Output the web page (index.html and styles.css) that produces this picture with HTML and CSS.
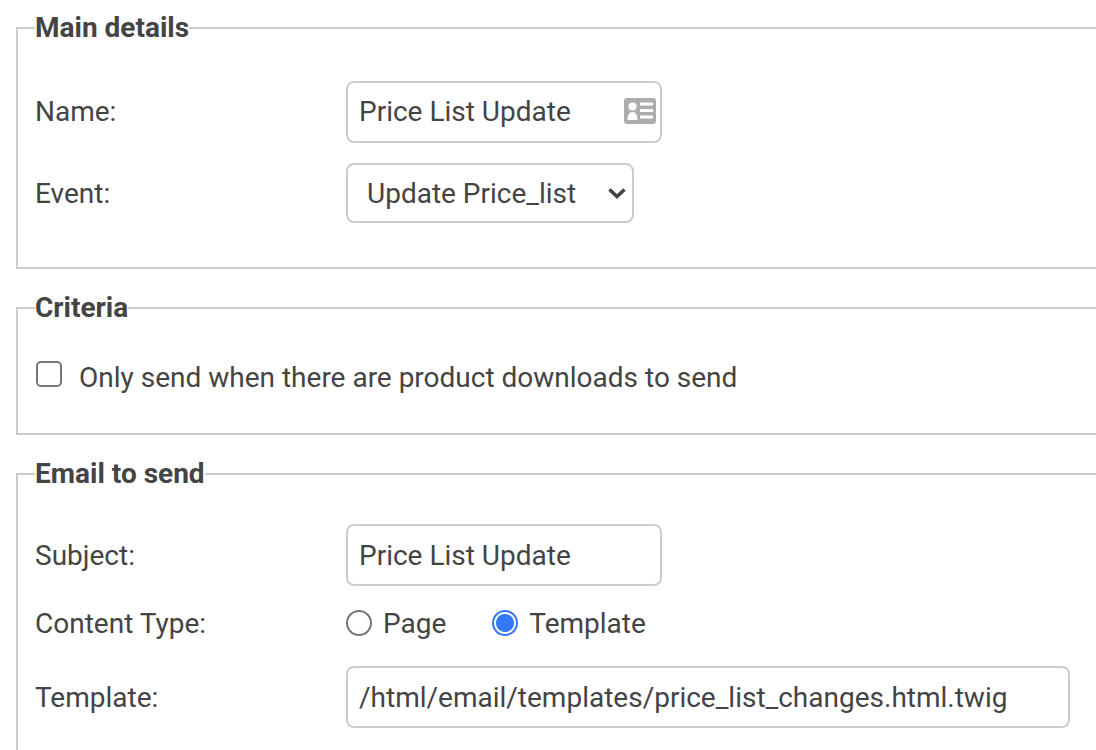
FILE: index.html
```html
<!DOCTYPE html>
<html lang="en">
<head>
<meta charset="utf-8">
<title>Price List Update</title>
<link rel="stylesheet" href="styles.css">
</head>
<body>
<form class="form">
  <fieldset class="group group-main">
    <legend>Main details</legend>
    <div class="row">
      <label class="label label-name" for="name">Name:</label>
      <div class="field field-name">
        <input class="control control-text" id="name" type="text" value="Price List Update">
        <svg class="field-icon" viewBox="0 0 32 26" aria-hidden="true">
          <rect width="32" height="26" rx="3" fill="#adadad"/>
          <circle cx="8.500" cy="8.500" r="4" fill="#fff"/>
          <path d="M3.500 22c0-5 1.500-8 5-8s5 3 5 8z" fill="#fff"/>
          <path d="M16 4.500h13v3H16zM16 11h13v3H16zM16 17.500h13v3H16z" fill="#fff"/>
        </svg>
      </div>
    </div>
    <div class="row">
      <label class="label" for="event">Event:</label>
      <div class="field field-event">
        <select class="control select" id="event">
          <option>Update Price_list</option>
        </select>
        <svg class="select-arrow" viewBox="0 0 20 12" aria-hidden="true">
          <path d="M2.500 2.500 10 9.500l7.500-7" fill="none" stroke="#444" stroke-width="3.600"/>
        </svg>
      </div>
    </div>
  </fieldset>

  <fieldset class="group group-criteria">
    <legend>Criteria</legend>
    <label class="check">
      <input class="box" type="checkbox">
      <span class="check-text">Only send when there are product downloads to send</span>
    </label>
  </fieldset>

  <fieldset class="group group-email">
    <legend>Email to send</legend>
    <div class="row">
      <label class="label" for="subject">Subject:</label>
      <div class="field field-name">
        <input class="control" id="subject" type="text" value="Price List Update">
      </div>
    </div>
    <div class="row row-radio">
      <span class="label">Content Type:</span>
      <div class="radios">
        <label class="radio-item"><input class="dot" type="radio" name="ctype"><span>Page</span></label>
        <label class="radio-item"><input class="dot" type="radio" name="ctype" checked><span>Template</span></label>
      </div>
    </div>
    <div class="row">
      <label class="label" for="template">Template:</label>
      <div class="field field-template">
        <input class="control" id="template" type="text" value="/html/email/templates/price_list_changes.html.twig">
      </div>
    </div>
  </fieldset>
</form>
</body>
</html>
```

FILE: styles.css
```css
html, body {
  margin: 0;
  height: 750px;
  overflow: hidden;
  background: #fff;
}

body {
  font-family: Roboto, "Liberation Sans", sans-serif;
  font-size: 28px;
  color: #444;
}

.form {
  width: 1120px;
  padding: 12px 0 0 16px;
  display: flex;
  flex-direction: column;
  gap: 23px;
}

.group {
  margin: 0;
  min-width: 0;
  border: 2px solid #ccc;
  padding: 0 17px;
}

.group legend {
  padding: 0;
  font-size: 28px;
  font-weight: 700;
  line-height: 32px;
}

.group-main {
  padding-top: 37px;
  padding-bottom: 44px;
}

.group-criteria {
  padding-top: 29px;
  padding-bottom: 39px;
}

.group-email {
  padding-top: 34px;
  padding-bottom: 40px;
}

.row {
  display: flex;
  align-items: center;
  margin-bottom: 20px;
}

.row:last-child {
  margin-bottom: 0;
}

.row-radio {
  height: 34px;
  margin-bottom: 26px;
}

.label {
  flex: 0 0 311px;
}

.label-name {
  padding-bottom: 2px;
}

.field {
  position: relative;
}

.field-name { width: 316px; }
.field-event { width: 288px; }
.field-template { width: 724px; }

.control {
  display: block;
  box-sizing: border-box;
  width: 100%;
  height: 62px;
  margin: 0;
  padding: 0 11px;
  border: 2px solid #ccc;
  border-radius: 8px;
  background: #fff;
  font: inherit;
  color: #444;
  outline: 0;
}

.control-text {
  padding-bottom: 2px;
}

.select {
  height: 60px;
  padding-left: 19px;
  appearance: none;
}

.field-icon {
  position: absolute;
  right: 6px;
  top: 17px;
  width: 32px;
  height: 26px;
}

.select-arrow {
  position: absolute;
  right: 7px;
  top: 24px;
  width: 20px;
  height: 12px;
}

.check {
  display: flex;
  align-items: center;
  gap: 17px;
}

.box {
  margin-left: 1px;
}

.check-text {
  margin-top: 8px;
}

.radios {
  display: flex;
  gap: 46px;
}

.radio-item {
  display: flex;
  align-items: center;
  gap: 11px;
}

.box, .dot {
  appearance: none;
  box-sizing: border-box;
  flex: none;
  width: 26px;
  height: 26px;
  background: #fff;
  border: 2px solid #767676;
}

.dot {
  margin: 0;
  border-radius: 50%;
}

.box {
  margin-top: 0;
  margin-right: 0;
  margin-bottom: 0;
  border-radius: 5px;
}

.dot:checked {
  border-color: #3478f6;
  background: radial-gradient(circle, #3478f6 0 8.500px, #fff 9.500px);
}
```
